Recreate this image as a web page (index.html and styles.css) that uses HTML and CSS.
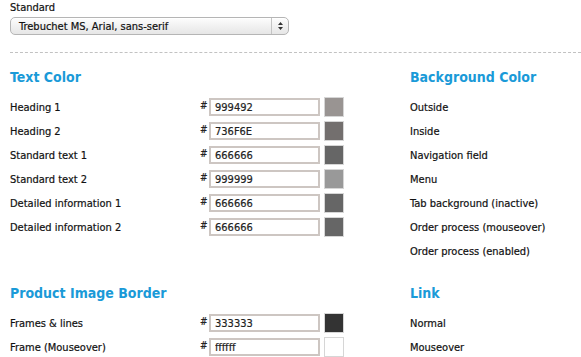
FILE: index.html
```html
<!DOCTYPE html>
<html lang="en">
<head>
    <meta charset="UTF-8">
    <title>Colors</title>
    <link rel="stylesheet" href="styles.css">
</head>
<body>
    <div class="page">
        <!-- font -->
        <div class="font-block">
            <label class="font-label">Standard</label>
            <div class="select">
                <span class="select-text">Trebuchet MS, Arial, sans-serif</span>
                <span class="select-arrows">
                    <svg width="7" height="10" viewBox="0 0 7 10"><path d="M3.5 1 L6 4 L1 4 Z M3.5 9 L6 6 L1 6 Z" fill="#333"/></svg>
                </span>
            </div>
        </div>
        <div class="divider"></div>

        <div class="sections">
            <!-- text color -->
            <div class="section">
                <h2>Text Color</h2>
                <div class="row">
                    <span class="name">Heading 1</span>
                    <span class="hash">#</span>
                    <input type="text" class="hex" value="999492">
                    <span class="swatch" style="background:#999492"></span>
                </div>
                <div class="row">
                    <span class="name">Heading 2</span>
                    <span class="hash">#</span>
                    <input type="text" class="hex" value="736F6E">
                    <span class="swatch" style="background:#736F6E"></span>
                </div>
                <div class="row">
                    <span class="name">Standard text 1</span>
                    <span class="hash">#</span>
                    <input type="text" class="hex" value="666666">
                    <span class="swatch" style="background:#666666"></span>
                </div>
                <div class="row">
                    <span class="name">Standard text 2</span>
                    <span class="hash">#</span>
                    <input type="text" class="hex" value="999999">
                    <span class="swatch" style="background:#999999"></span>
                </div>
                <div class="row">
                    <span class="name">Detailed information 1</span>
                    <span class="hash">#</span>
                    <input type="text" class="hex" value="666666">
                    <span class="swatch" style="background:#666666"></span>
                </div>
                <div class="row">
                    <span class="name">Detailed information 2</span>
                    <span class="hash">#</span>
                    <input type="text" class="hex" value="666666">
                    <span class="swatch" style="background:#666666"></span>
                </div>
            </div>

            <!-- background color -->
            <div class="section">
                <h2>Background Color</h2>
                <div class="row"><span class="name">Outside</span></div>
                <div class="row"><span class="name">Inside</span></div>
                <div class="row"><span class="name">Navigation field</span></div>
                <div class="row"><span class="name">Menu</span></div>
                <div class="row"><span class="name">Tab background (inactive)</span></div>
                <div class="row"><span class="name">Order process (mouseover)</span></div>
                <div class="row"><span class="name">Order process (enabled)</span></div>
            </div>

            <!-- image border -->
            <div class="section">
                <h2>Product Image Border</h2>
                <div class="row">
                    <span class="name">Frames &amp; lines</span>
                    <span class="hash">#</span>
                    <input type="text" class="hex" value="333333">
                    <span class="swatch" style="background:#333333"></span>
                </div>
                <div class="row">
                    <span class="name">Frame (Mouseover)</span>
                    <span class="hash">#</span>
                    <input type="text" class="hex" value="ffffff">
                    <span class="swatch" style="background:#ffffff"></span>
                </div>
            </div>

            <!-- link -->
            <div class="section">
                <h2>Link</h2>
                <div class="row"><span class="name">Normal</span></div>
                <div class="row"><span class="name">Mouseover</span></div>
            </div>
        </div>
    </div>
</body>
</html>
```

FILE: styles.css
```css
/* page */
body {
    margin: 0;
    padding: 0;
    background-color: #fff;
    font-family: "DejaVu Sans Condensed", "DejaVu Sans", sans-serif;
    font-size: 11px;
    color: #111;
    -webkit-text-stroke: 0.2px;
}
.page {
    padding-left: 10px;
}

/* font select */
.font-label {
    display: block;
    line-height: 16px;
}
.select {
    margin-top: 1px;
    width: 279px;
    height: 18px;
    box-sizing: border-box;
    border: 1px solid #b5b5b5;
    border-radius: 5px;
    background: linear-gradient(#fdfdfd, #e6e6e6);
    display: flex;
    align-items: center;
    box-shadow: inset 0 1px 0 #fff;
}
.select-text {
    flex: 1;
    padding-left: 8px;
    color: #111;
}
.select-arrows {
    width: 16px;
    height: 100%;
    border-left: 1px solid #c4c4c4;
    display: flex;
    align-items: center;
    justify-content: center;
}
.divider {
    margin-top: 17px;
    border-top: 1px dashed #c2c2c2;
}

/* sections */
.sections {
    display: grid;
    grid-template-columns: 400px 1fr;
    row-gap: 21px;
    padding-top: 15px;
}
.section h2 {
    margin: 0 0 9px;
    font-size: 14px;
    line-height: 18px;
    font-weight: bold;
    color: #1a9ad8;
    -webkit-text-stroke: 0;
}
.row {
    display: flex;
    align-items: center;
    height: 24px;
}
.name {
    width: 190px;
}
.hash {
    width: 9px;
    font-size: 10px;
    color: #222;
    margin-bottom: 3px;
}
.hex {
    width: 111px;
    height: 18px;
    box-sizing: border-box;
    border: 2px solid #cdc6c2;
    padding: 0 4px;
    margin: 0;
    font-family: inherit;
    font-size: 11px;
    color: #222;
    outline: none;
    -webkit-text-stroke: 0.2px;
}
.swatch {
    margin-left: 4px;
    width: 20px;
    height: 20px;
    box-sizing: border-box;
    border: 1px solid #d6d6d6;
}
```
